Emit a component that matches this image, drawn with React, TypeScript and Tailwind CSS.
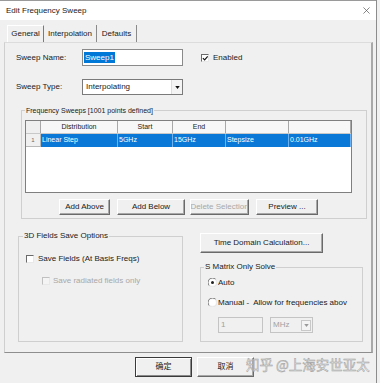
import React from "react";

const F = "[font-family:'Liberation_Sans','Noto_Sans_CJK_SC',Arial,sans-serif]";

function Btn({ w, h = 16, children, disabled = false, def = false, cls = "" }: { w: number; h?: number; children: React.ReactNode; disabled?: boolean; def?: boolean; cls?: string }) {
  return (
    <div
      style={{ width: w, height: h }}
      className={`flex shrink-0 items-center justify-center overflow-hidden whitespace-nowrap bg-[#f0f0f0] text-[8px] ${disabled ? "text-[#a8a8a8]" : "text-[#1a1a1a]"} ${def ? "border border-[#3a3a3a] [box-shadow:inset_1px_1px_0_#fff,inset_-1px_-1px_0_#8a8a8a]" : "border-t border-l border-t-white border-l-white border-r border-b border-r-[#6a6a6a] border-b-[#6a6a6a] [box-shadow:inset_-1px_-1px_0_#a8a8a8]"} ${cls}`}
    >
      {children}
    </div>
  );
}

function Check({ checked = false, disabled = false }: { checked?: boolean; disabled?: boolean }) {
  return (
    <div className={`relative h-[8px] w-[8px] shrink-0 border-t border-l ${disabled ? "border-[#c0c0c0] bg-[#f4f4f4]" : "border-[#6a6a6a] bg-white"} border-r border-b border-r-[#e8e8e8] border-b-[#e8e8e8]`}>
      {checked && (
        <svg viewBox="0 0 8 8" className="absolute left-0 top-0 h-[7px] w-[7px]">
          <path d="M1 3.5 L3 5.5 L6.5 1.5" stroke="#111" strokeWidth="1.3" fill="none" />
        </svg>
      )}
    </div>
  );
}

function Radio({ on = false }: { on?: boolean }) {
  return (
    <svg viewBox="0 0 9 9" className="h-[9px] w-[9px] shrink-0">
      <path d="M7.7 1.3 A4 4 0 0 0 1.3 7.7" stroke="#707070" strokeWidth="1" fill="none" />
      <path d="M1.3 7.7 A4 4 0 0 0 7.7 1.3" stroke="#e4e4e4" strokeWidth="1" fill="none" />
      <circle cx="4.5" cy="4.5" r="3.3" fill="#fff" />
      {on && <circle cx="4.5" cy="4.5" r="1.5" fill="#222" />}
    </svg>
  );
}

function Arrow({ gray = false }: { gray?: boolean }) {
  return (
    <svg viewBox="0 0 6 4" className="h-[3px] w-[5px]">
      <path d="M0 0 L6 0 L3 4 Z" fill={gray ? "#9a9a9a" : "#111"} />
    </svg>
  );
}

export default function App() {
  const headers = ["Distribution", "Start", "End", "", ""];
  const widths = [77, 55, 53, 63, 62];
  const row = ["Linear Step", "5GHz", "15GHz", "Stepsize", "0.01GHz"];
  return (
    <div className={`relative h-[383px] w-[380px] overflow-hidden bg-[#f0f0f0] text-[#1a1a1a] ${F}`}>
      <div className="flex h-full w-[377px] flex-col border-r border-[#8c8c8c]">
        {/* title bar */}
        <div className="flex h-[20px] shrink-0 items-center justify-between border-t border-[#9a9a9a] bg-white pl-[6px] pr-[6px]">
          <span className="text-[8px] text-[#222]">Edit Frequency Sweep</span>
          <svg viewBox="0 0 8 8" className="h-[7px] w-[7px]">
            <path d="M0.5 0.5 L7.5 7.5 M7.5 0.5 L0.5 7.5" stroke="#555" strokeWidth="0.8" />
          </svg>
        </div>

        {/* tabs */}
        <div className="ml-[7px] mt-[5px] flex h-[17px] shrink-0 items-stretch text-[8px]">
          <div className="flex w-[37px] items-center justify-center border-t border-l border-t-white border-l-white border-r border-r-[#7a7a7a] bg-[#f0f0f0]">General</div>
          <div className="flex w-[53px] items-center justify-center border-r border-r-[#8a8a8a]">Interpolation</div>
          <div className="flex w-[40px] items-center justify-center border-r border-r-[#8a8a8a]">Defaults</div>
        </div>

        {/* panel */}
        <div className="ml-[4px] flex h-[311px] w-[369px] shrink-0 flex-col border-t border-l border-t-[#dcdcdc] border-l-[#cfcfcf] border-r-2 border-b border-r-[#a8a8a8] border-b-[#8e8e8e]">
          {/* Sweep Name */}
          <div className="mt-[6px] flex h-[17px] items-center pl-[11px] text-[8px]">
            <span className="w-[66px]">Sweep Name:</span>
            <div className="flex h-[17px] w-[101px] items-center border border-[#8a8a8a] bg-white pl-[1px]">
              <span className="bg-[#0078d7] px-[1px] leading-[11px] text-white">Sweep1</span>
            </div>
            <div className="ml-[18px] flex items-center gap-[4px]">
              <Check checked />
              <span>Enabled</span>
            </div>
          </div>

          {/* Sweep Type */}
          <div className="mt-[13px] flex h-[16px] items-center pl-[11px] text-[8px]">
            <span className="w-[66px]">Sweep Type:</span>
            <div className="flex h-[16px] w-[101px] items-center border border-[#7a7a7a] bg-white pl-[3px]">
              <span className="flex-1">Interpolating</span>
              <div className="flex h-full w-[11px] items-center justify-center border-l border-[#dcdcdc] bg-[#f4f4f4]">
                <Arrow />
              </div>
            </div>
          </div>

          {/* Frequency Sweeps group */}
          <div className="relative ml-[16px] mt-[15px] h-[109px] w-[346px] shrink-0 border border-[#cfcfcf]">
            <span className="absolute -top-[5px] left-[3px] bg-[#f0f0f0] px-[1px] text-[7px] leading-[9px]">Frequency Sweeps [1001 points defined]</span>
            <div className="ml-[3px] mt-[9px] flex h-[73px] w-[327px] flex-col border border-[#7f7f7f] bg-white text-[7px]">
              <div className="flex h-[13px] border-b border-[#c8c8c8] bg-[#f7f7f7]">
                <div className="w-[15px] border-r border-[#a8a8a8] bg-[#efefef]" />
                {headers.map((h, i) => (
                  <div key={i} style={{ width: widths[i] }} className="flex items-center justify-center border-r border-[#a8a8a8]">
                    {h}
                  </div>
                ))}
              </div>
              <div className="flex h-[13px]">
                <div className="flex w-[15px] items-center justify-center border-r border-b border-[#b8b8b8] bg-[#f0f0f0] text-[6px] text-[#666]">1</div>
                {row.map((c, i) => (
                  <div key={i} style={{ width: widths[i] }} className="flex items-center border-r border-[#6fb0ee] bg-[#0a78d7] pl-[1px] text-white">
                    {c}
                  </div>
                ))}
              </div>
            </div>
            <div className="mt-[6px] flex h-[16px] items-center pl-[37px] text-[8px]">
              <Btn w={51}>Add Above</Btn>
              <Btn w={68} cls="ml-[7px]">Add Below</Btn>
              <Btn w={59} cls="ml-[5px] text-[7.5px]" disabled>Delete Selection</Btn>
              <Btn w={62} cls="ml-[7px]">Preview ...</Btn>
            </div>
          </div>

          {/* bottom section */}
          <div className="flex items-start">
            <div className="relative ml-[13px] mt-[17px] h-[106px] w-[165px] shrink-0 border border-[#cfcfcf] text-[8px]">
              <span className="absolute -top-[6px] left-[4px] bg-[#f0f0f0] px-[1px] leading-[10px]">3D Fields Save Options</span>
              <div className="mt-[16px] flex h-[11px] items-center gap-[4px] pl-[7px]">
                <Check />
                <span>Save Fields (At Basis Freqs)</span>
              </div>
              <div className="mt-[11px] flex h-[11px] items-center gap-[3px] pl-[23px] text-[#a8a8a8]">
                <Check disabled />
                <span>Save radiated fields only</span>
              </div>
            </div>

            <div className="ml-[17px] flex flex-col">
              <Btn w={123} h={20} cls="mt-[14px]">Time Domain Calculation...</Btn>
              <div className="relative mt-[14px] h-[75px] w-[163px] border border-[#cfcfcf] text-[8px]">
                <span className="absolute -top-[6px] left-[3px] bg-[#f0f0f0] px-[1px] leading-[10px]">S Matrix Only Solve</span>
                <div className="mt-[9px] flex h-[11px] items-center gap-[1px] pl-[7px]">
                  <Radio on />
                  <span>Auto</span>
                </div>
                <div className="mt-[9px] flex h-[11px] items-center gap-[1px] overflow-hidden whitespace-nowrap pl-[7px]">
                  <Radio />
                  <span>Manual -&nbsp; Allow for frequencies abov</span>
                </div>
                <div className="mt-[9px] flex h-[16px] items-center pl-[17px] text-[#a0a0a0]">
                  <div className="flex h-[16px] w-[45px] items-center border border-[#c4c4c4] bg-[#f0f0f0] pl-[2px]">1</div>
                  <div className="ml-[7px] flex h-[16px] w-[43px] items-center border border-[#c4c4c4] bg-[#f0f0f0] pl-[2px]">
                    <span className="flex-1">MHz</span>
                    <div className="mr-[1px] flex h-[11px] w-[10px] items-center justify-center border border-[#c8c8c8] bg-[#f4f4f4]">
                      <Arrow gray />
                    </div>
                  </div>
                </div>
              </div>
            </div>
          </div>
        </div>

        {/* dialog buttons */}
        <div className="ml-[135px] mt-[4px] flex h-[20px] items-center gap-[5px]">
          <Btn w={57} h={20} def>确定</Btn>
          <Btn w={57} h={20}>取消</Btn>
        </div>
      </div>

      {/* watermark */}
      <div className="pointer-events-none absolute left-[246px] top-[355px] whitespace-nowrap text-[13.5px] leading-[18px] text-[#ececec] [-webkit-text-stroke:0.5px_#a0a0a0] [font-family:'Noto_Sans_CJK_SC',sans-serif]">
        知乎 @上海安世亚太
      </div>
    </div>
  );
}
